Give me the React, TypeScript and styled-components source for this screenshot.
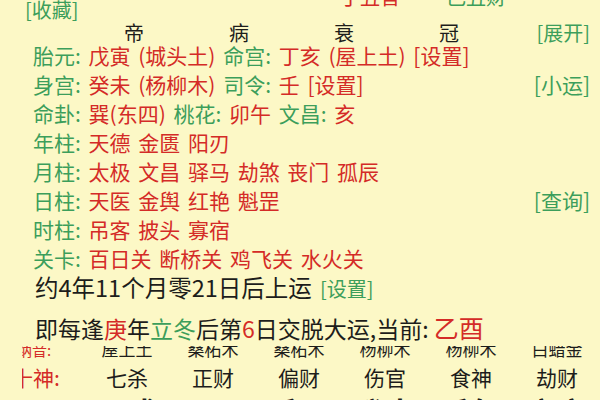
import React from "react";
import styled, { createGlobalStyle } from "styled-components";

const GREEN = "#3c9e5b";
const RED = "#d42b27";
const INK = "#1d1d1b";
const PAPER = "#fcf8c6";

const GlobalStyle = createGlobalStyle`
  html, body {
    margin: 0;
    padding: 0;
    background: ${PAPER};
  }
  body {
    font-family: "Noto Sans CJK SC", "Noto Sans", sans-serif;
  }
`;

const Page = styled.div`
  width: 600px;
  height: 400px;
  overflow: hidden;
  background: ${PAPER};
  color: ${INK};
  display: flex;
  flex-direction: column;
  white-space: pre;
`;

const Ink = styled.span<{ $tone?: "green" | "red" | "ink" }>`
  color: ${(p) => (p.$tone === "green" ? GREEN : p.$tone === "red" ? RED : INK)};
`;

/* first line is scrolled mostly out of view */
const TopStrip = styled.div`
  height: 18px;
  flex: none;
  display: grid;
  grid-template-columns: 315px 106px 1fr;
  align-items: end;
  padding-left: 25px;
  font-size: 20px;
  line-height: 20px;
`;

const ScrolledCell = styled.div<{ $tone: "green" | "red" }>`
  align-self: start;
  margin-top: -13px;
  color: ${(p) => (p.$tone === "green" ? GREEN : RED)};
`;

const StageRow = styled.div`
  height: 22px;
  flex: none;
  display: grid;
  grid-template-columns: repeat(3, 105px) 1fr auto;
  align-items: center;
  padding: 0 10px 0 124px;
  font-size: 20px;
`;

const Line = styled.div<{ $size?: number; $height?: number; $indent?: number }>`
  height: ${(p) => p.$height ?? 29}px;
  flex: none;
  display: flex;
  align-items: center;
  justify-content: space-between;
  padding: 0 10px 0 ${(p) => p.$indent ?? 33}px;
  font-size: ${(p) => p.$size ?? 21}px;
  word-spacing: 3px;
`;

const Small = styled.span`
  font-size: 20px;
  color: ${GREEN};
`;

const Current = styled.span`
  color: ${RED};
  font-size: 25px;
`;

const NoticeRow = styled(Line)`
  padding-top: 6px;
  position: relative;
  z-index: 1;
  background: ${PAPER};
  word-spacing: 0;
`;

const Table = styled.div`
  display: grid;
  grid-template-columns: 62px repeat(6, 86px);
  padding-left: 22px;
  flex: none;
`;

const TableRow = styled.div<{ $height: number; $clip?: boolean }>`
  display: contents;
  & > * {
    height: ${(p) => p.$height}px;
    overflow: hidden;
    display: flex;
    align-items: ${(p) => (p.$clip ? "flex-end" : "center")};
  }
`;

const RowLabel = styled.div<{ $size: number; $shift: number }>`
  color: ${RED};
  font-size: ${(p) => p.$size}px;
  line-height: ${(p) => p.$size + 3}px;
  & > span {
    margin-left: -${(p) => p.$shift}px;
  }
`;

const Cell = styled.div<{ $size: number; $tone?: "red" | "ink"; $bold?: boolean }>`
  justify-content: center;
  font-size: ${(p) => p.$size}px;
  line-height: ${(p) => p.$size + 3}px;
  font-weight: ${(p) => (p.$bold ? 700 : 400)};
  color: ${(p) => (p.$tone === "red" ? RED : INK)};
`;

const BigCell = styled(Cell)`
  align-items: flex-start !important;
  padding-top: 1px;
  box-sizing: border-box;
`;

const nayin = ["屋上土", "桑柘木", "桑柘木", "杨柳木", "杨柳木", "白蜡金"];
const gods = ["七杀", "正财", "偏财", "伤官", "食神", "劫财"];
const pillars = ["丙戌", "丁丑", "壬子", "癸未", "壬午", "辛亥"];

export default function App() {
  return (
    <Page>
      <GlobalStyle />
      <TopStrip>
        <Ink $tone="green">[收藏]</Ink>
        <ScrolledCell $tone="red">丁丑官</ScrolledCell>
        <ScrolledCell $tone="green">己丑财</ScrolledCell>
      </TopStrip>

      <StageRow>
        <span>帝</span>
        <span>病</span>
        <span>衰</span>
        <span>冠</span>
        <Ink $tone="green">[展开]</Ink>
      </StageRow>

      <Line>
        <span>
          <Ink $tone="green">胎元: </Ink>
          <Ink $tone="red">戊寅 (城头土) </Ink>
          <Ink $tone="green">命宫: </Ink>
          <Ink $tone="red">丁亥 (屋上土) [设置]</Ink>
        </span>
      </Line>
      <Line>
        <span>
          <Ink $tone="green">身宫: </Ink>
          <Ink $tone="red">癸未 (杨柳木) </Ink>
          <Ink $tone="green">司令: </Ink>
          <Ink $tone="red">壬 [设置]</Ink>
        </span>
        <Ink $tone="green">[小运]</Ink>
      </Line>
      <Line>
        <span>
          <Ink $tone="green">命卦: </Ink>
          <Ink $tone="red">巽(东四) </Ink>
          <Ink $tone="green">桃花: </Ink>
          <Ink $tone="red">卯午 </Ink>
          <Ink $tone="green">文昌: </Ink>
          <Ink $tone="red">亥</Ink>
        </span>
      </Line>
      <Line>
        <span>
          <Ink $tone="green">年柱: </Ink>
          <Ink $tone="red">天德 金匮 阳刃</Ink>
        </span>
      </Line>
      <Line>
        <span>
          <Ink $tone="green">月柱: </Ink>
          <Ink $tone="red">太极 文昌 驿马 劫煞 丧门 孤辰</Ink>
        </span>
      </Line>
      <Line>
        <span>
          <Ink $tone="green">日柱: </Ink>
          <Ink $tone="red">天医 金舆 红艳 魁罡</Ink>
        </span>
        <Ink $tone="green">[查询]</Ink>
      </Line>
      <Line>
        <span>
          <Ink $tone="green">时柱: </Ink>
          <Ink $tone="red">吊客 披头 寡宿</Ink>
        </span>
      </Line>
      <Line>
        <span>
          <Ink $tone="green">关卡: </Ink>
          <Ink $tone="red">百日关 断桥关 鸡飞关 水火关</Ink>
        </span>
      </Line>

      <Line $size={23.5} $indent={35}>
        <span>
          约4年11个月零21日后上运 <Small>[设置]</Small>
        </span>
      </Line>
      <NoticeRow $size={23} $indent={35} $height={39}>
        <span>
          即每逢<Ink $tone="red">庚</Ink>年<Ink $tone="green">立冬</Ink>后第
          <Ink $tone="red">6</Ink>日交脱大运,当前: <Current>乙酉</Current>
        </span>
      </NoticeRow>

      <Table>
        <TableRow $height={13} $clip>
          <RowLabel $size={15} $shift={5}>
            <span>纳音:</span>
          </RowLabel>
          {nayin.map((n, i) => (
            <Cell key={i} $size={17}>
              {n}
            </Cell>
          ))}
        </TableRow>
        <TableRow $height={35}>
          <RowLabel $size={21} $shift={10}>
            <span>十神:</span>
          </RowLabel>
          {gods.map((g) => (
            <Cell key={g} $size={21}>
              {g}
            </Cell>
          ))}
        </TableRow>
        <TableRow $height={40}>
          <RowLabel $size={21} $shift={10}>
            <span>大运:</span>
          </RowLabel>
          {pillars.map((p, i) => (
            <BigCell key={i} $size={30} $bold $tone={i === 1 ? "red" : "ink"}>
              {p}
            </BigCell>
          ))}
        </TableRow>
      </Table>
    </Page>
  );
}
